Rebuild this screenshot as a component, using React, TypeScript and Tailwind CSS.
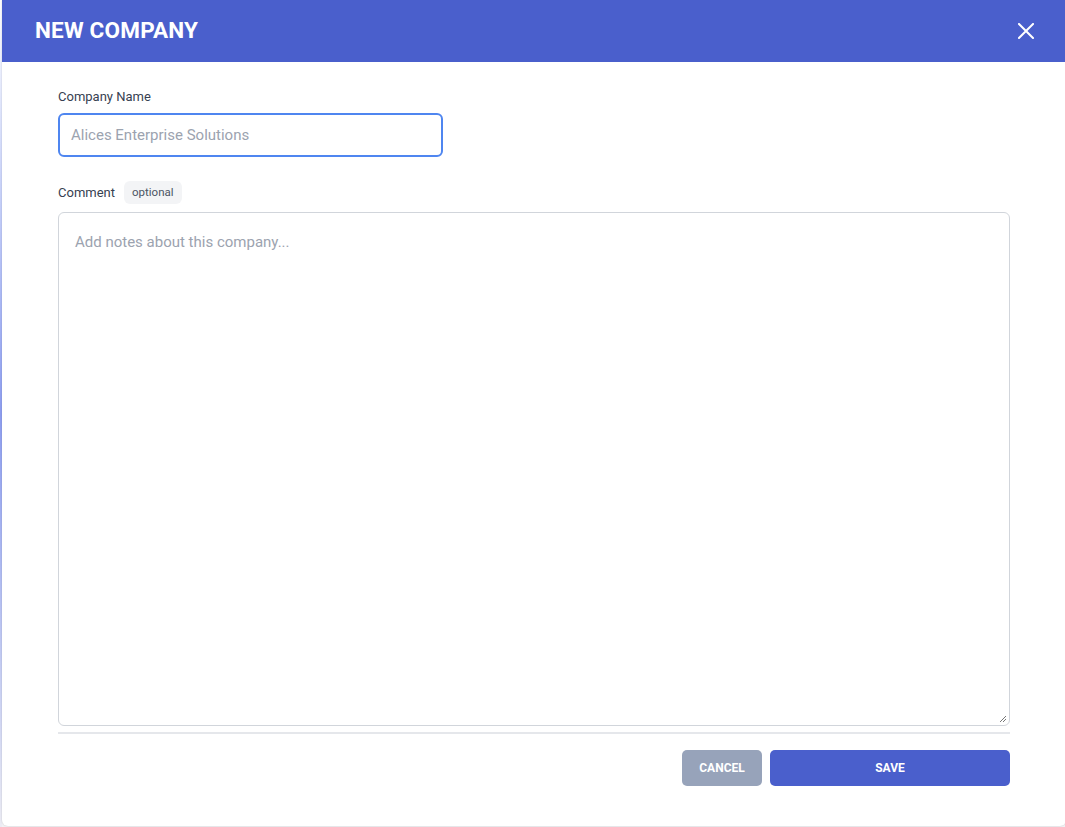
import React from "react";

export default function App() {
  const font = { fontFamily: "Roboto, 'Noto Sans', sans-serif" };
  return (
    <div className="flex h-[827px] w-[1065px] overflow-hidden bg-[#f2f2f5]" style={font}>
      <div className="w-[2px] shrink-0 bg-gradient-to-b from-white via-[#8e9ef0] to-[#ececf4]" />
      <div className="flex h-[826px] w-[1064px] shrink-0 flex-col overflow-hidden rounded-b-md bg-white shadow-[0_0_2px_rgba(0,0,0,0.18)]">
        <div className="flex h-[62px] shrink-0 items-center justify-between bg-[#4a5fcc] pl-[33px] pr-[32px]">
          <h1 className="text-[22.5px] font-bold tracking-[0.2px] text-white">NEW COMPANY</h1>
          <svg width="16" height="16" viewBox="0 0 16 16" fill="none" stroke="white" strokeWidth="2" strokeLinecap="square">
            <path d="M1 1L15 15M15 1L1 15" />
          </svg>
        </div>
        <div className="flex flex-1 flex-col px-[56px] pt-[24px] pb-[40px]">
          <label className="h-[20px] text-[13px] leading-[22px] text-[#374151]">Company Name</label>
          <div className="mt-[7px] flex h-[44px] w-[385px] items-center rounded-[6px] border-2 border-[#4f86f0] px-[11px]">
            <span className="text-[15px] text-[#9ca3af]">Alices Enterprise Solutions</span>
          </div>
          <div className="mt-[24px] flex h-[23px] items-center gap-[9px]">
            <span className="text-[13px] text-[#374151]">Comment</span>
            <span className="flex h-[23px] items-center rounded-[6px] bg-[#f3f4f6] px-[8px] text-[11.5px] text-[#4b5563]">optional</span>
          </div>
          <div className="relative mt-[8px] h-[514px] rounded-[6px] border border-[#d1d5db] px-[16px] pt-[17px]">
            <span className="text-[15px] text-[#9ca3af]">Add notes about this company...</span>
            <svg className="absolute bottom-[2px] right-[2px]" width="8" height="8" viewBox="0 0 8 8" stroke="#777" strokeWidth="1">
              <path d="M7 1L1 7M7 4L4 7" />
            </svg>
          </div>
          <div className="mt-[6px] h-[2px] bg-[#e5e7eb]" />
          <div className="mt-[16px] flex justify-end gap-[8px]">
            <button className="flex h-[36px] w-[80px] items-center justify-center rounded-[5px] bg-[#97a3ba] text-[12px] font-bold text-white">CANCEL</button>
            <button className="flex h-[36px] w-[240px] items-center justify-center rounded-[5px] bg-[#4a5fcc] text-[12px] font-bold text-white">SAVE</button>
          </div>
        </div>
      </div>
    </div>
  );
}
